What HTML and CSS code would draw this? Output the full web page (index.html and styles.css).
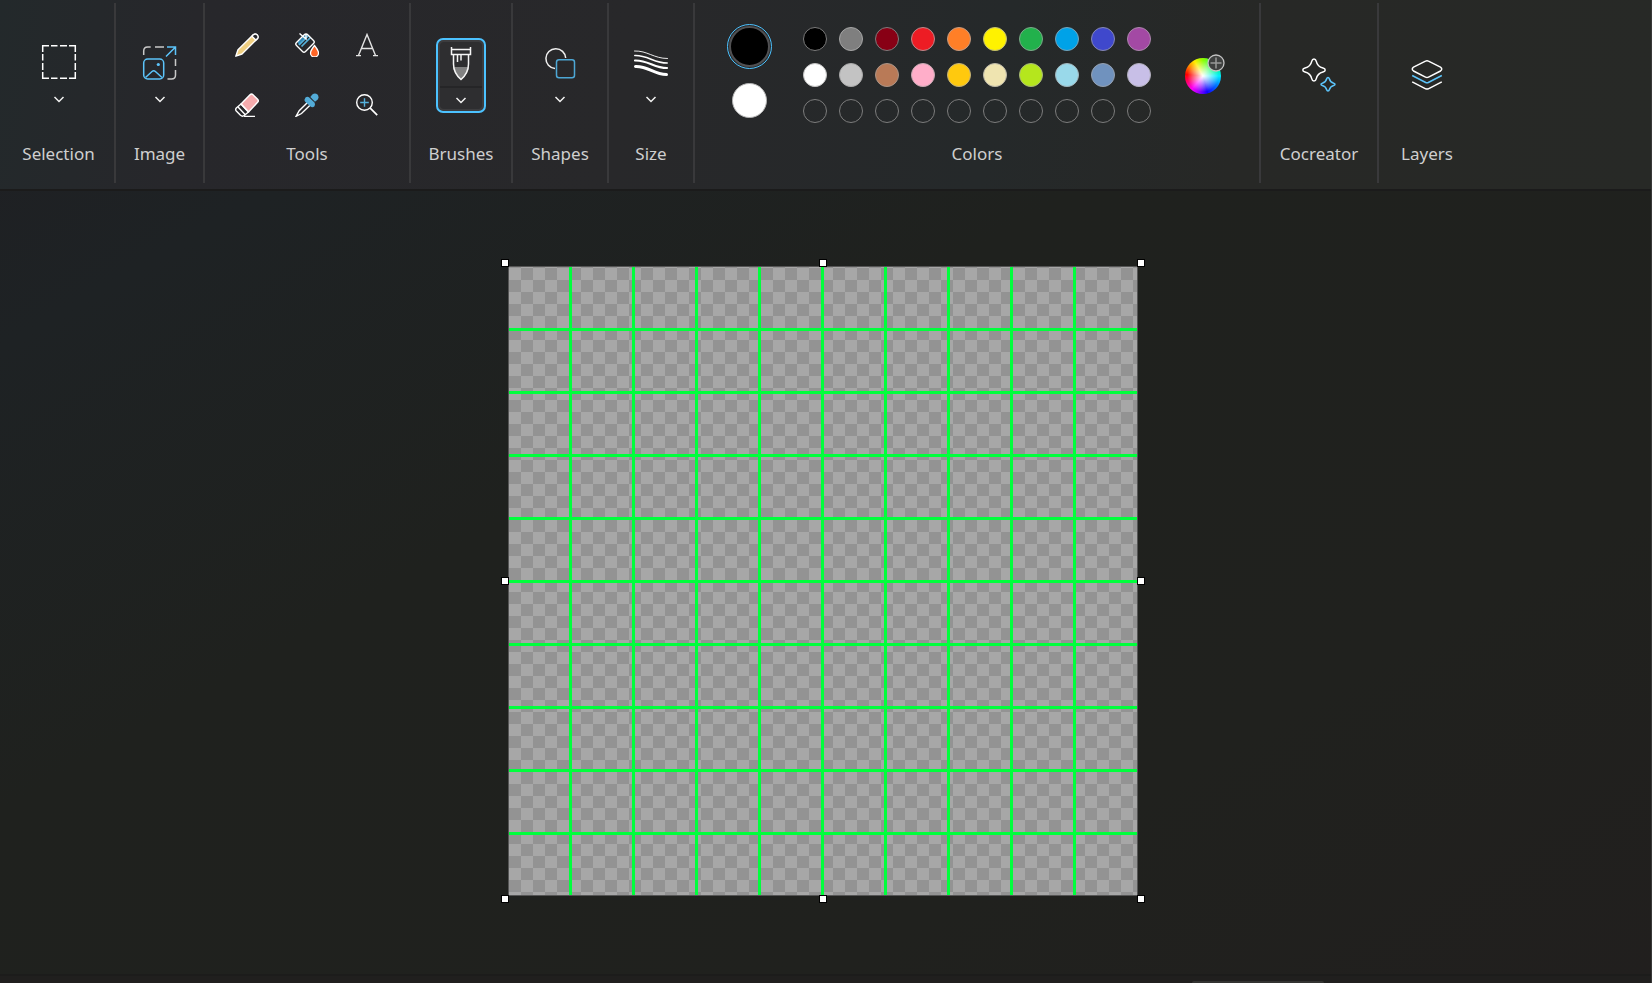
FILE: index.html
```html
<!DOCTYPE html>
<html lang="en">
<head>
<meta charset="utf-8">
<title>Paint</title>
<link rel="stylesheet" href="styles.css">
</head>
<body>
<svg class="defs" aria-hidden="true">
  <symbol id="chevron" viewBox="0 0 14 14"><path d="M2.500 5 7 9.500 11.500 5" fill="none" stroke="#f2f2f2" stroke-width="1.500"/></symbol>
</svg>
<header class="ribbon">
  <section class="group group-selection">
    <button class="stack" aria-label="Selection">
      <svg class="icon" viewBox="0 0 36 36" fill="none" stroke="#fff" stroke-width="1.500">
        <path d="M1.700 8V1.700H8M28 1.700h6.300V8M34.300 28v6.300H28M8 34.300H1.700V28M10 1.700h6.500M19 1.700h7M10 34.300h6.500M19 34.300h7M1.700 10v6.500M1.700 19v7M34.300 10v6.500M34.300 19v7"/>
      </svg>
      <svg class="chevron"><use href="#chevron"/></svg>
    </button>
    <h2 class="label">Selection</h2>
  </section>
  <section class="group group-image">
    <button class="stack" aria-label="Image">
      <svg class="icon" viewBox="0 0 36 36" fill="none" stroke-width="1.500">
        <path stroke="#c9c9c9" d="M1.700 11V7q0-4 4-4h3M13 3h9M33.500 15v7M33.500 26v5q0 4-4 4h-4"/>
        <g stroke="#5cc4fa">
          <path d="M24 12.500 33.300 3.200M25 3h8.500v8"/>
          <rect x="1.700" y="15" width="20" height="20" rx="4"/>
          <path d="m3.500 33.500 6.500-6q1.700-1.500 3.400 0l6.600 6"/>
        </g>
        <circle cx="16.300" cy="20.500" r="1.600" fill="#5cc4fa"/>
      </svg>
      <svg class="chevron"><use href="#chevron"/></svg>
    </button>
    <h2 class="label">Image</h2>
  </section>
  <section class="group group-tools">
    <div class="tools">
      <button class="tool" aria-label="Pencil">
        <svg viewBox="0 0 24 24"><path d="M.8 23.200 3 16.800 18.200 1.800q2-1.500 4 .3 1.500 2 0 3.800L7 21Z" fill="#f0cf82" stroke="#fff" stroke-width="1.400" stroke-linejoin="round"/><path d="M17 3.200 18.500 1.600q2-1.300 3.800.3 1.500 2 .2 3.700l-1.700 1.500Z" fill="#27272b" stroke="#fff" stroke-width="1.400"/></svg>
      </button>
      <button class="tool" aria-label="Fill">
        <svg viewBox="0 0 24 24" fill="none"><path d="M2.500 9 9 2.500l4-1.200L4 12Z" fill="#2f89b8"/><path d="M4 12 13.500 2.500M6.500 13.500l9-9" stroke="#55b1dc" stroke-width="1.700"/><path d="M1.500 12.500q-1.500-1.500 0-3L9 2q2-2 4 0l5.500 5.500q1.500 1.500 0 3L10.500 18.500q-1.500 1.500-3 0Z" stroke="#fff" stroke-width="1.400"/><path d="m4.500.5 6.500 5.500V1" stroke="#fff" stroke-width="1.400"/><path d="M19.500 12.500q4 5 4 7.500a3.800 3.800 0 0 1-8 0q0-2.500 4-7.500Z" fill="#ff6526" stroke="#fff" stroke-width="1.300"/></svg>
      </button>
      <button class="tool" aria-label="Text">
        <svg viewBox="0 0 24 24" fill="none" stroke="#e3e3e3" stroke-width="1.400"><path d="M3.500 22.500 12 1.500l8.500 21M6.300 15.500h11.400M1 22.600h5M18 22.600h5"/></svg>
      </button>
      <button class="tool" aria-label="Eraser">
        <svg viewBox="0 0 24 24" fill="none" stroke="#fff" stroke-width="1.400" stroke-linejoin="round"><path d="m6 11 9-9.300q1.500-1.400 3 0l4.600 4.600q1.400 1.500 0 3L13.500 19Z" fill="#f5abad"/><path d="m6 11-4.700 4q-1.300 1.500 0 3l4.200 4.300q2 1.700 4 0l4-3.300Z"/><path d="m3 14 7.500 8M9 23.400h11"/></svg>
      </button>
      <button class="tool" aria-label="Color picker">
        <svg viewBox="0 0 24 24"><path d="M12.500 9.500 4.200 17.700 1 23.300l5.500-2.800 8.500-8.300" fill="none" stroke="#fff" stroke-width="1.400"/><path d="M10.500 4.500q2-1.500 4 .3l4.700 4.400q1.800 2 .3 4-2 2-4.300 0L10.200 8.700q-1.500-2 .3-4.200Z" fill="#53acd8"/><path d="m15.300 4 2-2.500q2.700-2 5.200 0 2 2.700 0 5.200L20 8.700Z" fill="#53acd8"/></svg>
      </button>
      <button class="tool" aria-label="Magnifier">
        <svg viewBox="0 0 24 24" fill="none" stroke="#fff" stroke-width="1.400"><circle cx="9.500" cy="9.500" r="7.800"/><path d="m15.200 15.200 7 7" stroke-width="1.700"/><path d="M9.500 5.200v8.600M5.200 9.500h8.600" stroke="#55b1dc"/></svg>
      </button>
    </div>
    <h2 class="label">Tools</h2>
  </section>
  <section class="group group-brushes">
    <div class="split">
      <button class="split-main" aria-label="Brush">
        <svg class="icon" viewBox="0 0 36 36" fill="none" stroke="#f5f5f5" stroke-width="1.500"><path d="M10 21h16q-1 6.500-8 13-7-6.500-8-13Z" fill="#818181" stroke="none"/><path d="M8.500 1v7.500h19V1M8.500 3.500h19"/><path d="M10.500 8.500V18q0 9 7.500 15.500 7.500-6.500 7.500-15.500V8.500M14.500 9v7M18 9v5.500"/></svg>
      </button>
      <button class="split-more" aria-label="More brushes"><svg class="chevron"><use href="#chevron"/></svg></button>
    </div>
    <h2 class="label">Brushes</h2>
  </section>
  <section class="group group-shapes">
    <button class="stack" aria-label="Shapes">
      <svg class="icon" viewBox="0 0 36 36" fill="none" stroke-width="1.500"><path d="M13 24.500A9.900 9.900 0 1 1 23.700 14" stroke="#f0f0f0"/><rect x="14.500" y="15.700" width="18" height="18" rx="2.500" stroke="#4da7d5"/></svg>
      <svg class="chevron"><use href="#chevron"/></svg>
    </button>
    <h2 class="label">Shapes</h2>
  </section>
  <section class="group group-size">
    <button class="stack" aria-label="Size">
      <svg class="icon" viewBox="0 0 36 36" fill="none" stroke="#fff" stroke-linecap="round"><path stroke-width=".9" d="M1.500 7c13-.5 19 7.500 33 7.500"/><path stroke-width="1.600" d="M1.800 11.500c13-.5 19 7.500 32.400 7.500"/><path stroke-width="2.200" d="M2 16.500c13-.5 19 7.500 32 7.500"/><path stroke-width="3" d="M2.500 22.500c13-.5 18 8 31 8"/></svg>
      <svg class="chevron"><use href="#chevron"/></svg>
    </button>
    <h2 class="label">Size</h2>
  </section>
  <section class="group group-colors">
    <div class="colors">
      <div class="active-colors">
        <button class="primary" aria-label="Color 1: black"></button>
        <button class="secondary" aria-label="Color 2: white"></button>
      </div>
      <div class="palette">
        <button class="swatch black" aria-label="Black"></button>
        <button class="swatch gray" aria-label="Gray"></button>
        <button class="swatch dark-red" aria-label="Dark red"></button>
        <button class="swatch red" aria-label="Red"></button>
        <button class="swatch orange" aria-label="Orange"></button>
        <button class="swatch yellow" aria-label="Yellow"></button>
        <button class="swatch green" aria-label="Green"></button>
        <button class="swatch turquoise" aria-label="Turquoise"></button>
        <button class="swatch indigo" aria-label="Indigo"></button>
        <button class="swatch purple" aria-label="Purple"></button>
        <button class="swatch white" aria-label="White"></button>
        <button class="swatch light-gray" aria-label="Light gray"></button>
        <button class="swatch brown" aria-label="Brown"></button>
        <button class="swatch rose" aria-label="Rose"></button>
        <button class="swatch gold" aria-label="Gold"></button>
        <button class="swatch light-yellow" aria-label="Light yellow"></button>
        <button class="swatch lime" aria-label="Lime"></button>
        <button class="swatch light-turquoise" aria-label="Light turquoise"></button>
        <button class="swatch blue-gray" aria-label="Blue gray"></button>
        <button class="swatch lavender" aria-label="Lavender"></button>
        <button class="swatch" aria-label="Empty 1"></button>
        <button class="swatch" aria-label="Empty 2"></button>
        <button class="swatch" aria-label="Empty 3"></button>
        <button class="swatch" aria-label="Empty 4"></button>
        <button class="swatch" aria-label="Empty 5"></button>
        <button class="swatch" aria-label="Empty 6"></button>
        <button class="swatch" aria-label="Empty 7"></button>
        <button class="swatch" aria-label="Empty 8"></button>
        <button class="swatch" aria-label="Empty 9"></button>
        <button class="swatch" aria-label="Empty 10"></button>
      </div>
      <button class="wheel" aria-label="Edit colors">
        <svg class="wheel-badge" viewBox="0 0 18 18"><circle cx="9" cy="9" r="8" fill="#3e403f" stroke="#c4c4c4" stroke-width="1.300"/><path d="M9 3.500v11M3.500 9h11" stroke="#989898" stroke-width="1.500"/></svg>
      </button>
    </div>
    <h2 class="label">Colors</h2>
  </section>
  <section class="group group-cocreator">
    <button class="single" aria-label="Cocreator">
      <svg class="icon" viewBox="0 0 36 36" fill="none" stroke-width="1.500" stroke-linejoin="round"><path stroke="#fff" d="M13 2q1.700 0 2.200 2.200 1.300 5.600 6.800 6.800 2.200.5 2.200 2T22 15q-5.500 1.300-6.800 6.800-.5 2.200-2.200 2.200t-2.200-2.200Q9.500 16.300 4 15q-2.200-.5-2.200-2T4 11q5.500-1.200 6.800-6.800Q11.300 2 13 2Z"/><path stroke="#5cc4fa" d="M27 20.500q1 0 1.300 1.300.9 3.500 4.400 4.400 1.300.3 1.300 1.100t-1.300 1.100q-3.500.9-4.400 4.400Q28 34 27 34t-1.300-1.200q-.9-3.500-4.400-4.400-1.300-.3-1.300-1.100t1.300-1.100q3.500-.9 4.400-4.400.3-1.300 1.300-1.300Z"/></svg>
    </button>
    <h2 class="label">Cocreator</h2>
  </section>
  <section class="group group-layers">
    <button class="single" aria-label="Layers">
      <svg class="icon" viewBox="0 0 36 36" fill="none" stroke="#fff" stroke-width="1.500" stroke-linejoin="round"><path d="m16.500 4.200-12 6q-2.500 1.800 0 3.800l12 6.200q1.500.8 3 0l12-6.200q2.500-2 0-3.800l-12-6q-1.500-.8-3 0Z"/><path stroke="#5cc4fa" d="m3.200 18.500 13.500 7q1.300.6 2.600 0l13.500-7"/><path d="m3.200 24.800 13.500 7q1.300.6 2.600 0l13.500-7"/></svg>
    </button>
    <h2 class="label">Layers</h2>
  </section>
</header>
<main class="workspace">
  <div class="canvas" role="img" aria-label="Transparent canvas with a green grid">
    <span class="handle top left"></span>
    <span class="handle top center"></span>
    <span class="handle top right"></span>
    <span class="handle middle left"></span>
    <span class="handle middle right"></span>
    <span class="handle bottom left"></span>
    <span class="handle bottom center"></span>
    <span class="handle bottom right"></span>
  </div>
</main>
<footer class="status"><div class="status-tab"></div></footer>
</body>
</html>
```
FILE: styles.css
```css
* { box-sizing: border-box; }

body {
  margin: 0;
  height: 100vh;
  display: flex;
  flex-direction: column;
  overflow: hidden;
  font-family: "Noto Sans", "Open Sans", sans-serif;
  color: #cfcfcf;
  background: linear-gradient(150deg, #1f1f23 0%, #1e2224 18%, #1f211e 42%, #20211e 75%, #211f1e 100%);
  border-right: 1px solid #383838;
}

button {
  margin: 0;
  padding: 0;
  border: 0;
  background: none;
  color: inherit;
  font: inherit;
}

svg { display: block; }
.defs { position: absolute; width: 0; height: 0; }
.icon { width: 36px; height: 36px; }
.chevron { width: 14px; height: 14px; }

.ribbon {
  flex: none;
  display: flex;
  height: 191px;
  padding: 3px 0 6px;
  border-bottom: 2px solid #1b1b1b;
  background: linear-gradient(100deg, #23292b 0%, #27272b 12%, #28282a 38%, #25292a 60%, #272826 75%, #272926 100%);
}

.group {
  flex: none;
  display: flex;
  flex-direction: column;
  justify-content: space-between;
  align-items: center;
  padding-bottom: 17px;
  border-right: 2px solid #39393b;
}

.group-selection { width: 116px; padding-left: 3px; }
.group-image { width: 89px; }
.group-tools { width: 206px; }
.group-brushes { width: 102px; }
.group-shapes { width: 96px; }
.group-size { width: 86px; }
.group-colors { width: 566px; }
.group-cocreator { width: 118px; }
.group-layers { width: 96px; border-right: 0; }

.label {
  margin: 0;
  font-size: 17px;
  line-height: 24px;
  font-weight: 400;
}

.stack {
  display: flex;
  flex-direction: column;
  align-items: center;
  gap: 12px;
  padding-top: 41px;
}

.single { padding-top: 54px; }

.tools {
  display: grid;
  grid-template-columns: repeat(3, 60px);
  grid-auto-rows: 60px;
  padding-top: 12px;
}

.tool {
  display: grid;
  place-items: center;
}

.tool svg { width: 24px; height: 24px; }

.split {
  display: flex;
  flex-direction: column;
  width: 50px;
  height: 75px;
  margin-top: 35px;
  padding: 2px;
  border: 2px solid #4cc2ff;
  border-radius: 7px;
  background: #3c3c3e;
}

.split-main,
.split-more {
  display: grid;
  place-items: center;
  background: #2e2e30;
}

.split-main {
  flex: 1;
  border-radius: 4px 4px 0 0;
  border-bottom: 2px solid #252527;
}

.split-more {
  height: 21px;
  padding-top: 2px;
  border-radius: 0 0 4px 4px;
}

.colors {
  display: flex;
  align-items: flex-start;
  width: 100%;
  padding: 21px 0 0 32px;
}

.active-colors {
  display: flex;
  flex-direction: column;
  align-items: center;
  gap: 14px;
  margin-right: 31px;
}

.primary {
  display: grid;
  place-items: center;
  width: 45px;
  height: 45px;
  border: 1px solid #4cc2ff;
  border-radius: 50%;
}

.primary::before {
  content: "";
  width: 37px;
  height: 37px;
  border: 2px solid #505052;
  border-radius: 50%;
  background: #000;
}

.secondary {
  width: 35px;
  height: 35px;
  border: 1px solid #b5b5b5;
  border-radius: 50%;
  background: #fff;
}

.palette {
  display: grid;
  grid-template-columns: repeat(10, 24px);
  gap: 12px;
  padding-top: 3px;
  margin-right: 34px;
}

.swatch {
  height: 24px;
  border: 1px solid #7c7c7c;
  border-radius: 50%;
}

.black { background: #000; }
.gray { background: #7f7f7f; border-color: #a5a5a5; }
.dark-red { background: #880015; }
.red { background: #ed1c24; border-color: #b98b8d; }
.orange { background: #ff7f27; border-color: #c39b83; }
.yellow { background: #fff200; border-color: #c3bf75; }
.green { background: #22b14c; border-color: #7da88a; }
.turquoise { background: #00a2e8; border-color: #78a3b8; }
.indigo { background: #3f48cc; border-color: #8688b0; }
.purple { background: #a349a4; border-color: #aa88ab; }
.white { background: #fff; border-color: #c4c4c4; }
.light-gray { background: #c3c3c3; border-color: #aaa; }
.brown { background: #b97a57; border-color: #a99487; }
.rose { background: #ffaec9; border-color: #c7aab3; }
.gold { background: #ffc90e; border-color: #c3b27b; }
.light-yellow { background: #efe4b0; border-color: #bdb9a9; }
.lime { background: #b5e61d; border-color: #a8b87a; }
.light-turquoise { background: #99d9ea; border-color: #a2b7bd; }
.blue-gray { background: #7092be; border-color: #95a0af; }
.lavender { background: #c8bfe7; border-color: #b2afbc; }

.wheel {
  position: relative;
  width: 36px;
  height: 36px;
  margin-top: 34px;
  border-radius: 50%;
  background:
    radial-gradient(circle closest-side, #fff 0%, rgb(255 255 255 / 0) 88%),
    conic-gradient(#8cff00, #0f8 60deg, #0ef 90deg, #07f 125deg, #10f 165deg, #80f 190deg, #f0f 220deg, #f06 250deg, #f00 275deg, #f80 305deg, #fe0 330deg, #8cff00);
}

.wheel-badge {
  position: absolute;
  top: -4px;
  right: -4px;
  width: 18px;
  height: 18px;
}

.workspace {
  flex: 1;
  display: flex;
  justify-content: center;
  align-items: center;
  padding: 0 5px 3px 0;
}

.canvas {
  position: relative;
  width: 630px;
  height: 630px;
  border: 1px solid #555;
  background-color: #a7a7a7;
  background-image:
    repeating-linear-gradient(90deg, transparent 0 60px, #00ff3c 60px 63px),
    repeating-linear-gradient(180deg, transparent 0 60px, #00ff3c 60px 63px),
    conic-gradient(transparent 25%, #939393 0 50%, transparent 0 75%, #939393 0);
  background-size: 627px 100%, 100% 627px, 24px 24px;
  background-position: 0 0, 0 1px, 12px 1px;
  background-repeat: no-repeat, no-repeat, repeat;
  background-clip: padding-box;
}

.handle {
  position: absolute;
  width: 8px;
  height: 8px;
  border: 1px solid #000;
  background: #fff;
}

.top { top: -8px; }
.middle { top: calc(50% - 4px); }
.bottom { bottom: -8px; }
.left { left: -8px; }
.center { left: calc(50% - 4px); }
.right { right: -8px; }

.status {
  flex: none;
  display: flex;
  align-items: flex-end;
  height: 9px;
  padding-left: 72.2%;
  border-top: 2px solid #1c1c1b;
  background: #201f1e;
}

.status-tab {
  width: 132px;
  height: 2px;
  border-radius: 2px 2px 0 0;
  background: #333331;
}
```
